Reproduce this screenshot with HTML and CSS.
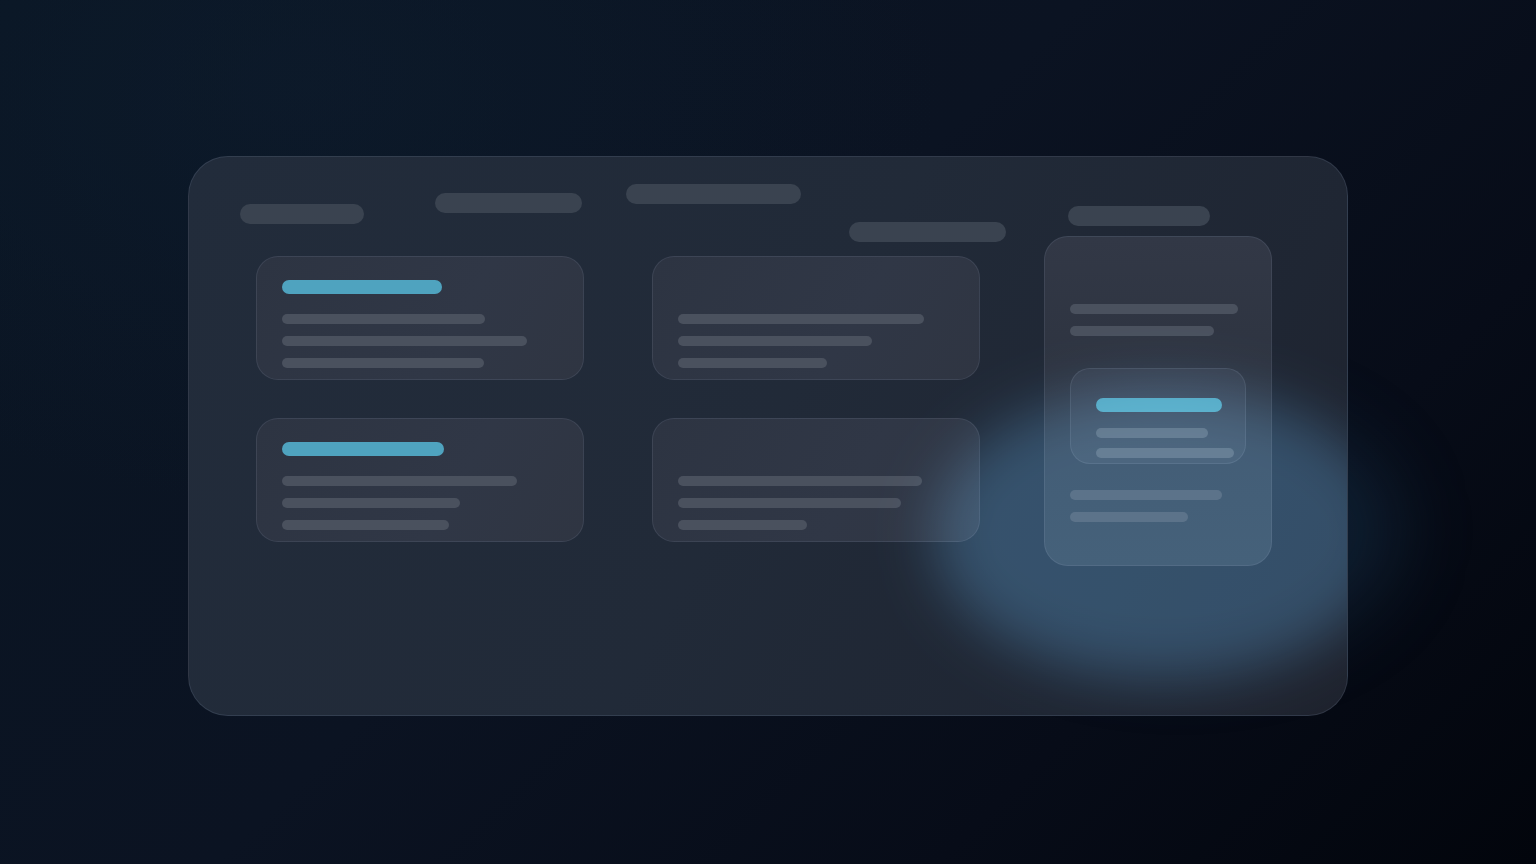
FILE: index.html
```html
<!DOCTYPE html>
<html lang="en">
<head>
<meta charset="utf-8">
<title>Board</title>
<link rel="stylesheet" href="styles.css">
</head>
<body>
<div class="stage">
  <div class="halo"></div>
  <div class="panel">
    <div class="header">
      <span class="pill p1"></span>
      <span class="pill p2"></span>
      <span class="pill p3"></span>
      <span class="pill p4"></span>
      <span class="pill p5"></span>
    </div>
    <div class="board">
      <div class="col col-a">
        <div class="card">
          <span class="bar accent w160"></span>
          <span class="bar w203"></span>
          <span class="bar w245"></span>
          <span class="bar w202"></span>
        </div>
        <div class="card">
          <span class="bar accent w162"></span>
          <span class="bar w235"></span>
          <span class="bar w178"></span>
          <span class="bar w167"></span>
        </div>
      </div>
      <div class="col col-b">
        <div class="card">
          <span class="bar w246"></span>
          <span class="bar w194"></span>
          <span class="bar w149"></span>
        </div>
        <div class="card">
          <span class="bar w244"></span>
          <span class="bar w223"></span>
          <span class="bar w129"></span>
        </div>
      </div>
      <div class="col col-c">
        <div class="card tall">
          <span class="bar w168"></span>
          <span class="bar w144"></span>
          <div class="inner">
            <span class="bar accent w126"></span>
            <span class="bar soft w112"></span>
            <span class="bar soft w138"></span>
          </div>
          <span class="bar w152 after"></span>
          <span class="bar w118"></span>
        </div>
      </div>
    </div>
    <div class="glow"></div>
  </div>
</div>
</body>
</html>
```
FILE: styles.css
```css
* { box-sizing: border-box; }
html, body { margin: 0; padding: 0; }
body {
  width: 1536px;
  height: 864px;
  overflow: hidden;
  font-family: "Inter", "Liberation Sans", sans-serif;
  background:
    radial-gradient(ellipse 900px 600px at 20% 10%, rgba(14, 30, 48, 0.5), transparent 70%),
    linear-gradient(135deg, #0a1624 0%, #0b1322 45%, #070c18 75%, #02050c 100%);
}
.stage {
  position: relative;
  width: 1536px;
  height: 864px;
  padding-top: 156px;
}
.halo {
  position: absolute;
  left: 960px;
  top: 400px;
  width: 440px;
  height: 260px;
  border-radius: 50%;
  background: rgba(40, 95, 135, 0.22);
  filter: blur(36px);
  pointer-events: none;
}
.panel {
  position: relative;
  overflow: hidden;
  width: 1160px;
  height: 560px;
  margin: 0 auto;
  border-radius: 40px;
  border: 1px solid rgba(140, 160, 190, 0.16);
  background: linear-gradient(120deg, #222c3b 0%, #212a38 50%, #1f2633 80%, #1e222d 100%);
  padding: 0 0 0 51px;
}
.header {
  display: flex;
  align-items: flex-start;
  height: 79px;
}
.pill {
  display: block;
  height: 20px;
  border-radius: 10px;
  background: #3a4350;
  flex: none;
}
.p1 { width: 124px; margin-top: 47px; }
.p2 { width: 147px; margin-top: 36px; margin-left: 71px; }
.p3 { width: 175px; margin-top: 27px; margin-left: 44px; }
.p4 { width: 157px; margin-top: 65px; margin-left: 48px; }
.p5 { width: 142px; margin-top: 49px; margin-left: 62px; }

.board {
  display: grid;
  grid-template-columns: 396px 392px 228px;
  padding-left: 16px;
}
.col {
  display: flex;
  flex-direction: column;
  gap: 38px;
}
.col-a, .col-b { padding-top: 20px; }

.card {
  width: 328px;
  height: 124px;
  border-radius: 22px;
  border: 1px solid rgba(150, 165, 190, 0.14);
  background: linear-gradient(120deg, #2d3442 0%, #303746 60%, #2f3542 100%);
  display: flex;
  flex-direction: column;
  justify-content: flex-end;
  align-items: flex-start;
  padding: 23px 25px 11px;
  gap: 12px;
}
.bar {
  display: block;
  height: 10px;
  border-radius: 5px;
  background: #4a515e;
  flex: none;
}
.bar.accent {
  height: 14px;
  border-radius: 7px;
  background: #4fa3bf;
  margin-bottom: 8px;
}
.card.tall {
  width: 228px;
  height: 330px;
  border-radius: 24px;
  justify-content: flex-start;
  padding: 67px 25px 0;
  background: linear-gradient(180deg, #323846 0%, #2e3441 40%, #313a47 100%);
}
.inner {
  width: 176px;
  height: 96px;
  margin-top: 20px;
  border-radius: 20px;
  border: 1px solid rgba(160, 180, 200, 0.14);
  background: rgba(120, 140, 165, 0.12);
  display: flex;
  flex-direction: column;
  align-items: flex-start;
  padding: 29px 0 0 25px;
  gap: 10px;
}
.inner .bar.accent { margin-bottom: 6px; }
.bar.soft { background: #56606e; }
.bar.after { margin-top: 14px; }

.w112 { width: 112px; } .w118 { width: 118px; } .w126 { width: 126px; }
.w129 { width: 129px; } .w138 { width: 138px; } .w144 { width: 144px; }
.w149 { width: 149px; } .w152 { width: 152px; } .w160 { width: 160px; }
.w162 { width: 162px; } .w167 { width: 167px; } .w168 { width: 168px; }
.w178 { width: 178px; } .w194 { width: 194px; } .w202 { width: 202px; }
.w203 { width: 203px; } .w223 { width: 223px; } .w235 { width: 235px; }
.w244 { width: 244px; } .w245 { width: 245px; } .w246 { width: 246px; }

.glow {
  position: absolute;
  left: 745px;
  top: 232px;
  width: 460px;
  height: 290px;
  border-radius: 50%;
  background: rgba(50, 100, 140, 0.5);
  filter: blur(28px);
  mix-blend-mode: screen;
  pointer-events: none;
}
```
